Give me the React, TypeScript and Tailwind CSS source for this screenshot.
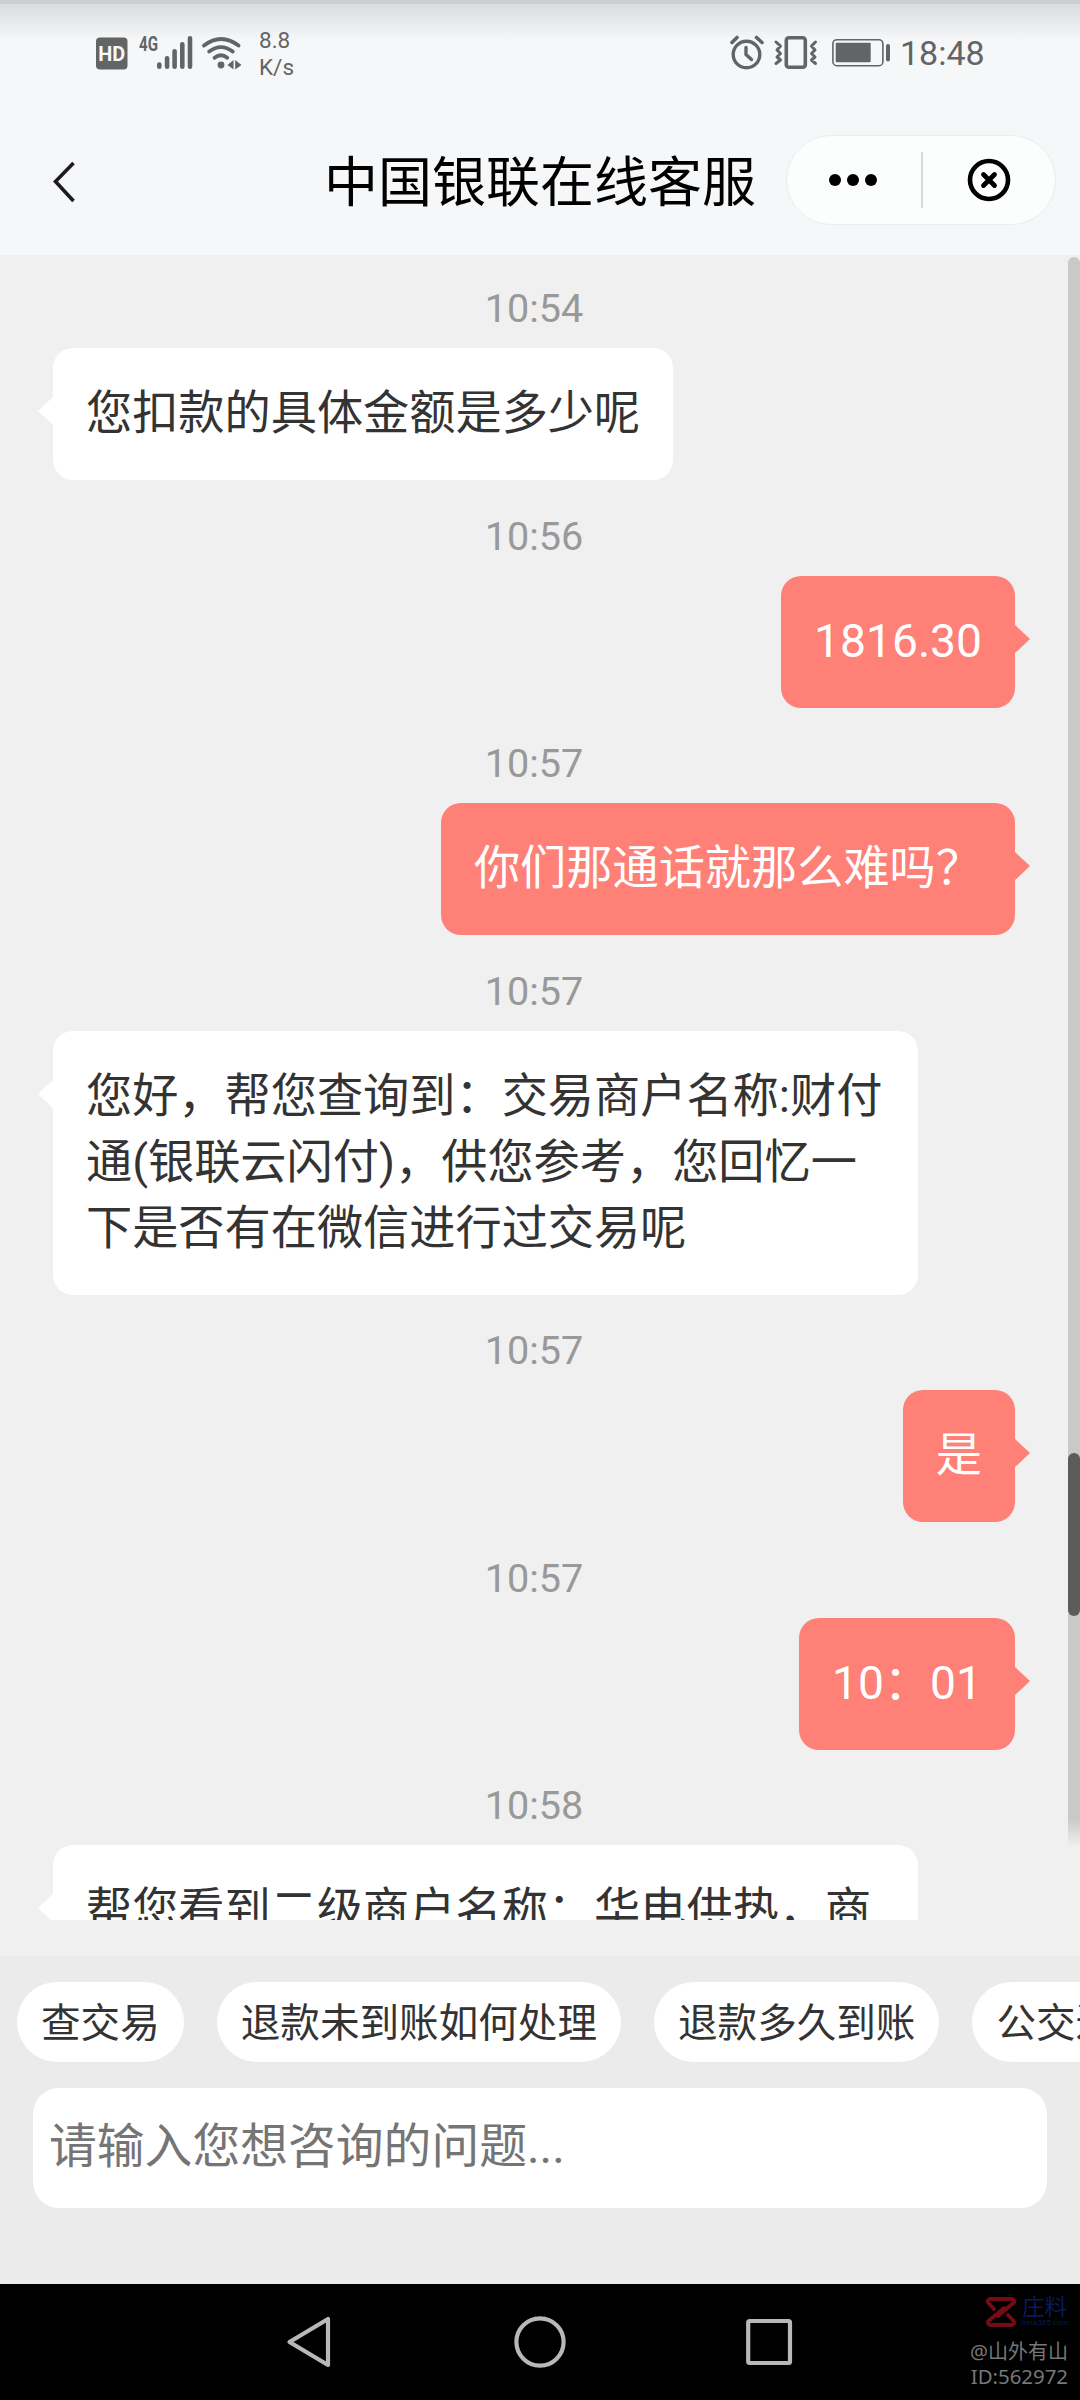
import React from "react";

type Message = { time: string; side: "in" | "out"; lines: string[] };

const messages: Message[] = [
  { time: "10:54", side: "in", lines: ["您扣款的具体金额是多少呢"] },
  { time: "10:56", side: "out", lines: ["1816.30"] },
  { time: "10:57", side: "out", lines: ["你们那通话就那么难吗？"] },
  {
    time: "10:57",
    side: "in",
    lines: [
      "您好，帮您查询到：交易商户名称:财付",
      "通(银联云闪付)，供您参考，您回忆一",
      "下是否有在微信进行过交易呢",
    ],
  },
  { time: "10:57", side: "out", lines: ["是"] },
  { time: "10:57", side: "out", lines: ["10：01"] },
  { time: "10:58", side: "in", lines: ["帮您看到二级商户名称：华电供热，商", ""] },
];

const chips = ["查交易", "退款未到账如何处理", "退款多久到账", "公交过闸"];

function StatusBar() {
  return (
    <div className="flex h-[105px] justify-between bg-linear-to-b from-[#dadcdd] to-[#f6f7f9] to-[36px] border-t-4 border-[#cdcfd0] pl-[96px] pr-[96px] text-[#636465]">
      <div className="flex">
        <svg className="mt-[32px] h-[36px] w-[148px]" viewBox="96 36 148 36" fill="none">
          <rect x="96" y="37.5" width="31.5" height="32" rx="4" fill="#636465" />
          <text x="111.8" y="61" textAnchor="middle" fontFamily="Roboto" fontWeight="700" fontSize="21" textLength="27" lengthAdjust="spacingAndGlyphs" fill="#f6f7f9">HD</text>
          <text x="139" y="51" fontFamily="Roboto" fontWeight="700" fontSize="20.5" textLength="19" lengthAdjust="spacingAndGlyphs" fill="#636465">4G</text>
          <g stroke="#636465" strokeWidth="4.6" strokeLinecap="round">
            <path d="M159.3 64.5V66.7M167.1 58.2V66.7M174.6 51.2V66.7M182.3 44.3V66.7M190 38.3V66.7" />
          </g>
          <g stroke="#636465" strokeWidth="3.8" strokeLinecap="round">
            <path d="M204 45.5Q221 32.500 238.500 45.500M209.200 51.600Q221 42.600 232.700 51.600M214.600 57.800Q221 52.800 227.200 57.800" />
          </g>
          <circle cx="221" cy="65" r="3.4" fill="#636465" />
          <path d="M227.500 65L233.500 60V69.500ZM241.500 65L235.200 60V69.500Z" fill="#636465" />
        </svg>
        <div className="ml-[15px] mt-[23px] flex flex-col text-[22.5px] leading-[27px]">
          <span>8.8</span>
          <span>K/s</span>
        </div>
      </div>
      <div className="flex">
        <svg className="mt-[30px] h-[38px] w-[162px]" viewBox="730 34 162 38" fill="none" stroke="#636465">
          <circle cx="746.5" cy="54.500" r="13.300" strokeWidth="3.400" />
          <path d="M746 47.500V54.500L751.500 59.500" strokeWidth="3.400" strokeLinecap="round" />
          <path d="M732 42.500L737 37.500M756.500 37.500L762 42.500" strokeWidth="3.600" strokeLinecap="round" />
          <rect x="786.300" y="37.700" width="19" height="29.600" rx="2.500" strokeWidth="3.600" />
          <path d="M776 42L780.500 46L777 50L780.500 53.500L777 57L780.500 60L776 63.500M815.500 42L811.500 46L815 50L811.500 53.500L815 57L811.500 60L815.500 63.500" strokeWidth="3" strokeLinejoin="round" strokeLinecap="round" />
          <rect x="832.900" y="39.700" width="50" height="26" rx="4" strokeWidth="1.600" />
          <rect x="835.700" y="42.700" width="35" height="19.500" rx="1" fill="#636465" stroke="none" />
          <path d="M888 46V59.500" strokeWidth="4" strokeLinecap="round" />
        </svg>
        <span className="ml-[8px] mt-[29px] w-[84px] text-[34px] leading-[40px]">18:48</span>
      </div>
    </div>
  );
}

function TitleBar() {
  return (
    <header className="relative flex h-[150px] items-center justify-center bg-[#f6f7f9]">
      <svg className="absolute left-[47px] top-[53px] h-[48px] w-[32px]" viewBox="0 0 32 48" fill="none" stroke="#1c1c1e" strokeWidth="3.600">
        <path d="M26.500 5L8.500 23.500L26.500 43" />
      </svg>
      <h1 className="pt-[8px] text-[54px] leading-[80px] text-black">中国银联在线客服</h1>
      <div className="absolute right-[24px] top-[30px] flex h-[90px] w-[270px] items-center rounded-full border border-[#ececee] bg-[#fcfdfd]">
        <div className="flex flex-1 justify-center gap-[6px] pr-[2px]">
          <i className="size-[12px] rounded-full bg-black" />
          <i className="size-[12px] rounded-full bg-black" />
          <i className="size-[12px] rounded-full bg-black" />
        </div>
        <div className="h-[56px] w-[2px] bg-[#d8d9da]" />
        <div className="flex flex-1 justify-center">
          <svg className="size-[44px]" viewBox="0 0 44 44" fill="none" stroke="#000">
            <circle cx="22" cy="22" r="19" strokeWidth="4.600" />
            <path d="M16.500 16.500L27.500 27.500M27.500 16.500L16.500 27.500" strokeWidth="4.800" strokeLinecap="round" />
          </svg>
        </div>
      </div>
    </header>
  );
}

function Bubble({ message }: { message: Message }) {
  const incoming = message.side === "in";
  const width = message.lines.length > 1 ? "w-[865px]" : "";
  return (
    <div className={incoming ? "flex justify-start pl-[53px]" : "flex justify-end pr-[53px]"}>
      <div
        className={
          (incoming
            ? "relative rounded-[20px] bg-white p-[33px] text-[#333333] "
            : "relative rounded-[20px] bg-[#ff8077] p-[33px] text-white ") + width
        }
      >
        <svg
          className={incoming ? "absolute -left-[15px] top-[48px] h-[30px] w-[16px]" : "absolute -right-[15px] top-[48px] h-[30px] w-[16px]"}
          viewBox="0 0 16 30"
        >
          <path d={incoming ? "M16 0L0 15L16 30Z" : "M0 0L16 15L0 30Z"} fill={incoming ? "#fff" : "#ff8077"} />
        </svg>
        {message.lines.map((line) => (
          <p key={line} className="h-[66px] whitespace-nowrap text-[46.2px] leading-[65px]">{line}</p>
        ))}
      </div>
    </div>
  );
}

function Conversation() {
  return (
    <main className="relative flex h-[1701px] flex-col bg-[#f0f0f0]">
      <div className="h-[1665px] w-[1068px] overflow-hidden">
        {messages.map((m, i) => (
          <section key={i}>
            <div className={i === 0 ? "flex h-[93px] items-end justify-center pb-[14px]" : "flex h-[95.5px] items-end justify-center pb-[14px]"}>
              <time className="text-[39.6px] leading-[50px] text-[#999999]">{m.time}</time>
            </div>
            <Bubble message={m} />
          </section>
        ))}
      </div>
      <div className="absolute right-0 top-[2px] h-[1590px] w-[12px] rounded-t-full bg-linear-to-b from-[#c9c9c9] from-[98.2%] to-[#f0f0f0]">
        <div className="mt-[1196px] h-[163px] w-[12px] rounded-full bg-[#5c5c5c]" />
      </div>
    </main>
  );
}

function Composer() {
  return (
    <footer className="h-[328px] overflow-hidden bg-[#ebebeb]">
      <div className="mt-[26px] flex gap-[33px] pl-[17px]">
        {chips.map((chip) => (
          <button key={chip} className="h-[80px] shrink-0 whitespace-nowrap rounded-full bg-white px-[24px] pt-[3px] text-[39.6px] leading-[60px] text-[#333333]">
            {chip}
          </button>
        ))}
      </div>
      <div className="mx-[33px] mt-[26px] flex h-[120px] items-center rounded-[26px] bg-white pb-[3px] pl-[16px] text-[47.8px] leading-[70px] text-[#757575]">
        请输入您想咨询的问题...
      </div>
    </footer>
  );
}

function NavBar() {
  return (
    <nav className="relative h-[116px] bg-black">
      <svg className="h-[116px] w-[1080px]" viewBox="0 0 1080 116" fill="none" stroke="#b8b8b8" strokeWidth="4.200" strokeLinejoin="round">
        <path d="M328 35V81L289.500 58Z" />
        <circle cx="540" cy="58" r="23.600" />
        <rect x="748.200" y="37" width="41.800" height="42" rx="1.500" />
      </svg>
      <div className="absolute right-[12px] top-[11px] flex flex-col items-end">
        <div className="flex h-[43px] gap-[5px]">
          <svg className="mt-[1px] h-[32px] w-[32px]" viewBox="0 0 32 32" fill="none" stroke="#780a14" strokeWidth="3.800" strokeLinejoin="round" strokeLinecap="round">
            <path d="M9 13L3 6.500Q2 3 6 3H26Q30 3 29 6.500L13 20M23 19L29 25.500Q30 29 26 29H6Q2 29 3 25.500L19 12" />
          </svg>
          <div className="w-[46px] text-[#0a1a58]">
            <div className="text-[22.500px] leading-[24px]">庄料</div>
            <div className="text-[8px] leading-[8px]">inna365.com</div>
          </div>
        </div>
        <div className="h-[25px] font-['Noto_Sans','Noto_Sans_CJK_SC',sans-serif] text-[20px] leading-[27px] text-[#777777]">@山外有山</div>
        <div className="h-[27px] font-['Noto_Sans',sans-serif] text-[20.4px] leading-[27px] text-[#777777]">ID:562972</div>
      </div>
    </nav>
  );
}

export default function App() {
  return (
    <div className="flex h-[2400px] w-[1080px] flex-col overflow-hidden bg-[#f0f0f0] font-[Roboto,'Noto_Sans_CJK_SC',sans-serif]">
      <StatusBar />
      <TitleBar />
      <Conversation />
      <Composer />
      <NavBar />
    </div>
  );
}
